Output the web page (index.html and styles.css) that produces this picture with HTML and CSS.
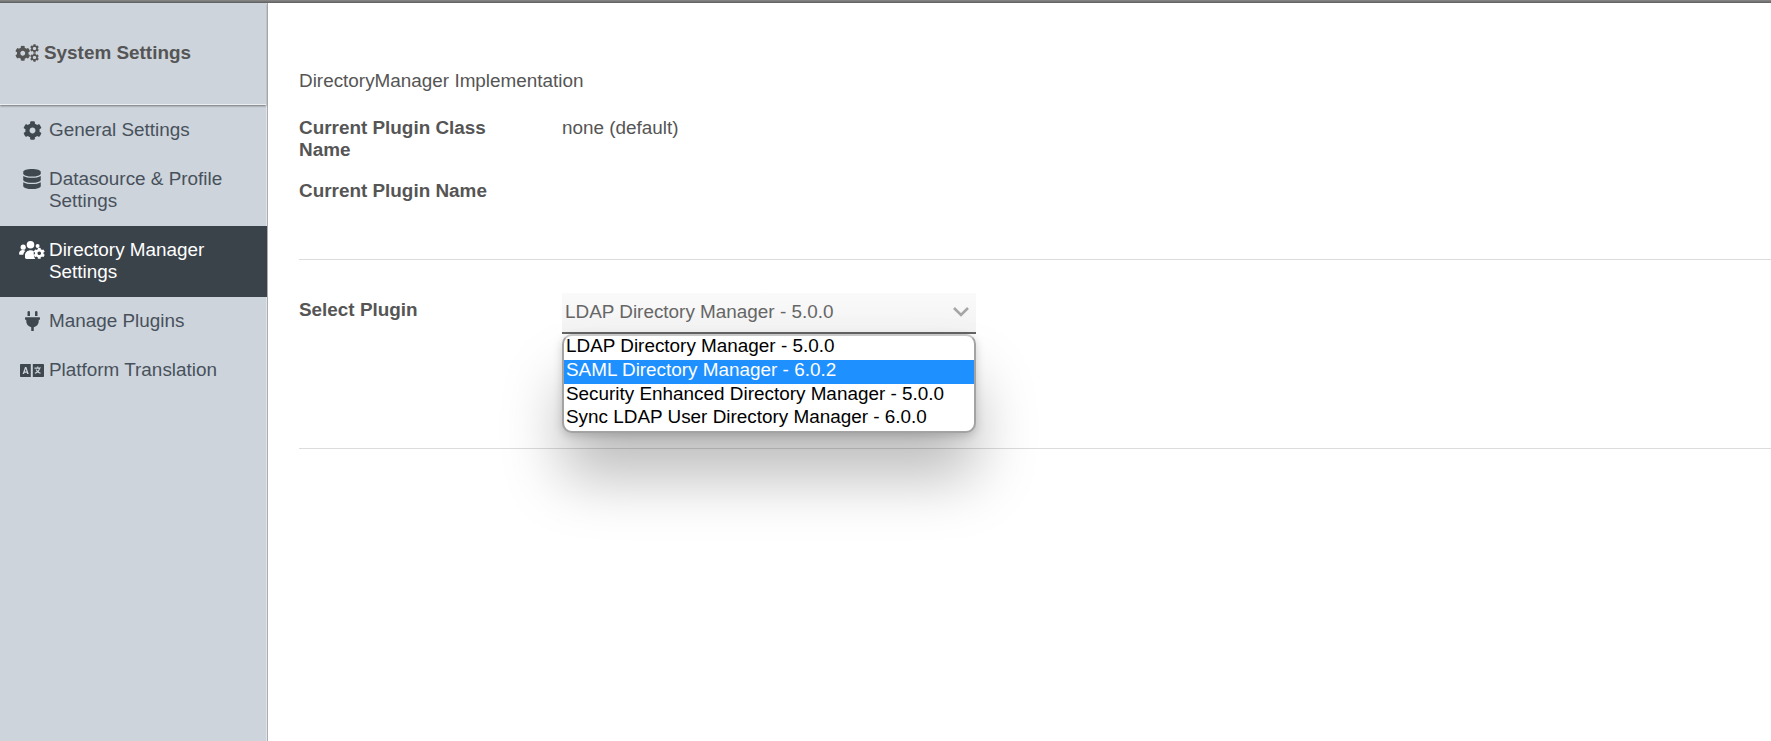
FILE: index.html
```html
<!DOCTYPE html>
<html lang="en">
<head>
<meta charset="utf-8">
<title>System Settings</title>
<link rel="stylesheet" href="styles.css">
</head>
<body>
<svg class="defs" width="0" height="0" aria-hidden="true">
  <symbol id="cog" viewBox="0 0 512 512"><path d="M487.4 315.7l-42.6-24.6c4.3-23.2 4.3-47 0-70.2l42.6-24.6c4.9-2.8 7.1-8.6 5.5-14-11.1-35.6-30-67.8-54.7-94.6-3.8-4.1-10-5.1-14.8-2.3L380.8 110c-17.9-15.4-38.5-27.3-60.8-35.1V25.8c0-5.6-3.9-10.5-9.4-11.7-36.7-8.2-74.3-7.8-109.2 0-5.5 1.2-9.4 6.1-9.4 11.7V75c-22.2 7.9-42.8 19.8-60.8 35.1L88.7 85.5c-4.9-2.8-11-1.9-14.8 2.3-24.7 26.7-43.6 58.9-54.7 94.6-1.7 5.4.6 11.2 5.5 14L67.3 221c-4.3 23.2-4.3 47 0 70.2l-42.6 24.6c-4.9 2.8-7.1 8.6-5.5 14 11.1 35.6 30 67.8 54.7 94.6 3.8 4.1 10 5.1 14.8 2.3l42.6-24.6c17.9 15.4 38.5 27.3 60.8 35.1v49.2c0 5.6 3.9 10.5 9.4 11.7 36.7 8.2 74.3 7.8 109.2 0 5.5-1.2 9.4-6.1 9.4-11.7v-49.2c22.2-7.9 42.8-19.8 60.8-35.1l42.6 24.6c4.9 2.8 11 1.9 14.8-2.3 24.7-26.7 43.6-58.9 54.7-94.6 1.5-5.5-.7-11.3-5.6-14.1zM256 336c-44.1 0-80-35.9-80-80s35.9-80 80-80 80 35.9 80 80-35.9 80-80 80z"/></symbol>
</svg>
<div class="topbar"></div>
<div class="app">
  <aside class="sidebar">
    <header class="side-head">
      <svg class="cogs" viewBox="0 0 24 18" fill="currentColor"><use href="#cog" x="0" y="1.500" width="15.500" height="15.500"/><use href="#cog" x="15" y="0" width="9" height="9"/><use href="#cog" x="15" y="9" width="9" height="9"/><circle cx="19.500" cy="4.500" r="1.600" fill="#cdd4db"/><circle cx="19.500" cy="13.500" r="1.600" fill="#cdd4db"/></svg>
      <span>System Settings</span>
    </header>
    <nav class="nav">
      <a class="nav-item">
        <span class="ico"><svg class="i18" fill="currentColor"><use href="#cog"/></svg></span>
        <span>General Settings</span>
      </a>
      <a class="nav-item">
        <span class="ico"><svg class="i-db" viewBox="0 0 448 512" fill="currentColor"><path d="M448 73.143v45.714C448 159.143 347.667 192 224 192S0 159.143 0 118.857V73.143C0 32.857 100.333 0 224 0s224 32.857 224 73.143zM448 176v102.857C448 319.143 347.667 352 224 352S0 319.143 0 278.857V176c48.125 33.143 136.208 48.572 224 48.572S399.874 209.143 448 176zm0 160v102.857C448 479.143 347.667 512 224 512S0 479.143 0 438.857V336c48.125 33.143 136.208 48.572 224 48.572S399.874 369.143 448 336z"/></svg></span>
        <span>Datasource &amp; Profile Settings</span>
      </a>
      <a class="nav-item active">
        <span class="ico"><svg class="i-users" viewBox="0 0 26 18" fill="currentColor"><circle cx="4.200" cy="6.200" r="2.600"/><circle cx="11.500" cy="3.800" r="3.800"/><circle cx="18.600" cy="5" r="2"/><path d="M0 13c0-2.500 1.600-4 3.800-4 1 0 1.800.3 2.600.9C5 11 4.400 12.100 4.300 13.700H1c-.6 0-1-.2-1-.7z"/><path d="M6 16.300v-1.800c0-3 2.500-5.200 5.700-5.200 1.300 0 2.400.3 3.200.9-.4 1.700-.2 5.800 1.400 7.800H7.600C6.700 18 6 17.300 6 16.300z"/><use href="#cog" x="14.500" y="6.500" width="11.500" height="11.500"/></svg></span>
        <span>Directory Manager Settings</span>
      </a>
      <a class="nav-item">
        <span class="ico"><svg class="i-plug" viewBox="0 0 384 512" fill="currentColor"><path d="M320 32a32 32 0 0 0-64 0v96h64zm48 128H16a16 16 0 0 0-16 16v32a16 16 0 0 0 16 16h16v32a160.070 160.070 0 0 0 128 156.800V512h64v-99.200A160.070 160.070 0 0 0 352 256v-32h16a16 16 0 0 0 16-16v-32a16 16 0 0 0-16-16zM128 32a32 32 0 0 0-64 0v96h64z"/></svg></span>
        <span>Manage Plugins</span>
      </a>
      <a class="nav-item">
        <span class="ico"><svg class="i-lang" viewBox="0 0 24 13" fill="currentColor" fill-rule="evenodd"><path d="M.8 0h10v13H.8a.8.8 0 0 1-.8-.8V.8A.8.8 0 0 1 .8 0zM5 3 2.600 10h1.500l.4-1.300h2.300l.4 1.300h1.500L6.400 3zm.700 1.800.8 2.700H4.900z"/><path d="M12.800 0h10.400a.8.8 0 0 1 .8.800v11.400a.8.8 0 0 1-.8.800H12.800zm4.400 2.400v1.100h-2.700v1.200h4.300c-.2.800-.6 1.500-1.100 2.100-.3-.4-.6-.8-.8-1.300h-1.300c.3.800.7 1.500 1.200 2.100-.6.500-1.300.8-2.200 1.100l.5 1.100c1-.3 1.900-.8 2.600-1.400.7.600 1.600 1.100 2.600 1.400l.5-1.100c-.8-.3-1.600-.6-2.200-1.100.8-.9 1.300-2.100 1.500-3.400h.9V3.500h-2.700V2.400z"/></svg></span>
        <span>Platform Translation</span>
      </a>
    </nav>
  </aside>
  <main class="content">
    <section class="block block-info">
      <h1 class="section-title">DirectoryManager Implementation</h1>
      <div class="row">
        <div class="label">Current Plugin Class Name</div>
        <div class="value">none (default)</div>
      </div>
      <div class="row">
        <div class="label">Current Plugin Name</div>
        <div class="value"></div>
      </div>
    </section>
    <section class="block block-select">
      <div class="row">
        <div class="label label-select">Select Plugin</div>
        <div class="value select-wrap">
          <div class="select">
            <span>LDAP Directory Manager - 5.0.0</span>
            <svg class="chev" viewBox="0 0 16 10" fill="none" stroke="currentColor" stroke-width="2.600"><path d="M1 1l7 7 7-7"/></svg>
          </div>
          <ul class="dropdown">
            <li>LDAP Directory Manager - 5.0.0</li>
            <li class="sel">SAML Directory Manager - 6.0.2</li>
            <li>Security Enhanced Directory Manager - 5.0.0</li>
            <li>Sync LDAP User Directory Manager - 6.0.0</li>
          </ul>
        </div>
      </div>
    </section>
  </main>
</div>
</body>
</html>
```

FILE: styles.css
```css
* { box-sizing: border-box; }
html, body { height: 100%; }
body {
  margin: 0;
  font-family: "Liberation Sans", Arial, sans-serif;
  font-size: 18.9px;
  color: #555;
  background: #fff;
  overflow: hidden;
}
.defs { display: block; height: 0; }
.topbar {
  height: 3px;
  background: linear-gradient(#8a8a8a, #5f5f5f);
}
.app {
  display: flex;
  height: 738px;
}
.sidebar {
  flex: 0 0 268px;
  background: #cdd4db;
  border-right: 1px solid #a9adb1;
  box-shadow: inset -1px 0 0 #e2e5e8;
}
.side-head {
  height: 102px;
  margin-right: 1px;
  display: flex;
  align-items: center;
  gap: 5px;
  padding: 0 0 2px 15px;
  font-weight: 700;
  color: #555;
  border-bottom: 1px solid #eceef0;
  box-shadow: 0 1px 2px rgba(0, 0, 0, .45);
}
.cogs { width: 24px; height: 18px; flex: none; }
.nav { padding-top: 1px; }
.nav-item {
  display: flex;
  align-items: flex-start;
  padding: 13px 20px 14px 20px;
  line-height: 22px;
  color: #48515b;
}
.nav-item.active {
  background: #3a424a;
  color: #fff;
}
.ico {
  flex: 0 0 29px;
  min-width: 0;
  height: 22px;
  display: flex;
  justify-content: center;
  align-items: center;
  padding-right: 5px;
  color: #3f474f;
}
.active .ico { color: #fff; }
.i18 { width: 19px; height: 19px; }
.i-db { width: 18px; height: 20px; }
.i-users { width: 26px; height: 18px; flex: none; }
.i-plug { width: 15px; height: 20px; }
.i-lang { width: 24px; height: 13px; flex: none; }
.content {
  flex: 1;
  padding: 0 0 0 31px;
  min-width: 0;
}
.block { border-bottom: 1px solid #dcdcdc; }
.block-info { height: 257px; padding-top: 67px; }
.block-select { height: 189px; padding-top: 33px; }
.section-title {
  margin: 0 0 25px;
  font-size: inherit;
  font-weight: 400;
  line-height: 22px;
  color: #555;
}
.row {
  display: flex;
  margin-bottom: 19.5px;
  line-height: 21.5px;
}
.label {
  flex: 0 0 263px;
  padding-right: 40px;
  font-weight: 700;
  color: #555;
}
.label-select { padding-top: 6px; }
.value { flex: 1; color: #555; }
.select-wrap { position: relative; flex: 0 0 414px; }
.select {
  height: 41px;
  display: flex;
  align-items: center;
  justify-content: space-between;
  padding: 0 7px 1px 3px;
  background: linear-gradient(#fafafa, #f3f3f3);
  border-bottom: 2px solid #666;
  color: #666;
}
.chev { width: 16px; height: 10px; color: #a6a6a6; }
.dropdown {
  position: absolute;
  left: 0;
  top: 41px;
  width: 414px;
  margin: 0;
  padding: 0;
  list-style: none;
  background: #fff;
  border: 2px solid #a3a3a3;
  border-top-color: #c8c8c8;
  border-radius: 10px;
  overflow: hidden;
  box-shadow: 0 45px 60px rgba(0, 0, 0, .26), 0 3px 10px rgba(0, 0, 0, .18);
  color: #000;
}
.dropdown li { padding: 0 2px; height: 23.75px; line-height: 19px; }
.dropdown .sel { background: #1e90ff; color: #fff; }
```
